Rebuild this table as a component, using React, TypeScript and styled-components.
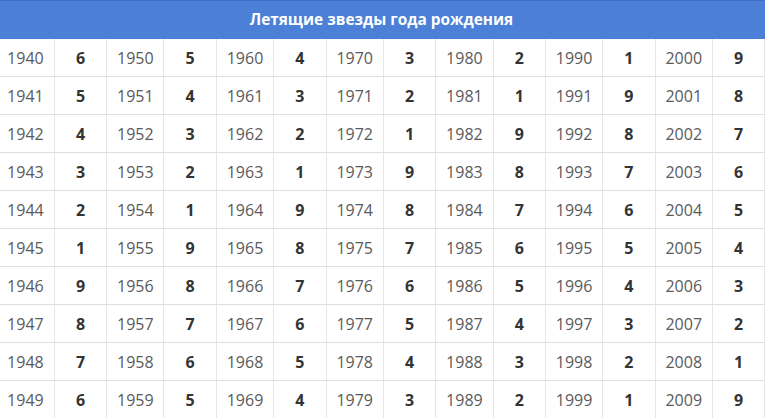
import React from 'react';
import styled, { createGlobalStyle } from 'styled-components';

const GlobalStyle = createGlobalStyle`
  html, body {
    margin: 0;
    padding: 0;
    background: #ffffff;
    overflow: hidden;
  }
  body {
    font-family: "Open Sans", "Liberation Sans", Arial, sans-serif;
  }
`

const Wrapper = styled.div`
  width: 765px;
  height: 418px;
  overflow: hidden;
  background: #fff;
`

const Table = styled.table`
  width: 768px;
  margin-left: -3px;
  border-collapse: collapse;
  table-layout: fixed;
`

const Caption = styled.th`
  height: 37px;
  padding: 0 0 1px 1px;
  background: #4b80d6;
  border-top: 1px solid #3f70c2;
  color: #fff;
  font-size: 15.4px;
  font-weight: 700;
  text-align: center;
  vertical-align: middle;
`

const Cell = styled.td<{ $bold?: boolean }>`
  height: 37px;
  padding: 0;
  text-align: center;
  vertical-align: middle;
  border-right: 1px solid #e6e6e6;
  border-bottom: 1px solid #dedede;
  font-size: 16px;
  font-weight: ${p => (p.$bold ? 700 : 400)};
  color: ${p => (p.$bold ? '#333' : '#5a5a5a')};
`

const star = (year: number) => {
  const v = (((6 - (year - 1940)) % 9) + 9) % 9;
  return v === 0 ? 9 : v;
}

const decades = [1940, 1950, 1960, 1970, 1980, 1990, 2000];

const App: React.FC = () => {
  return (
    <Wrapper>
      <GlobalStyle />
      <Table>
        <colgroup>
          {decades.map(d => (
            <React.Fragment key={d}>
              <col style={{ width: '57.3px' }} />
              <col style={{ width: '52.4px' }} />
            </React.Fragment>
          ))}
        </colgroup>
        <thead>
          <tr>
            <Caption colSpan={14}>Летящие звезды года рождения</Caption>
          </tr>
        </thead>
        <tbody>
          {Array.from({ length: 10 }, (_, i) => (
            <tr key={i}>
              {decades.map(d => (
                <React.Fragment key={d}>
                  <Cell>{d + i}</Cell>
                  <Cell $bold>{star(d + i)}</Cell>
                </React.Fragment>
              ))}
            </tr>
          ))}
        </tbody>
      </Table>
    </Wrapper>
  )
}

export default App;
